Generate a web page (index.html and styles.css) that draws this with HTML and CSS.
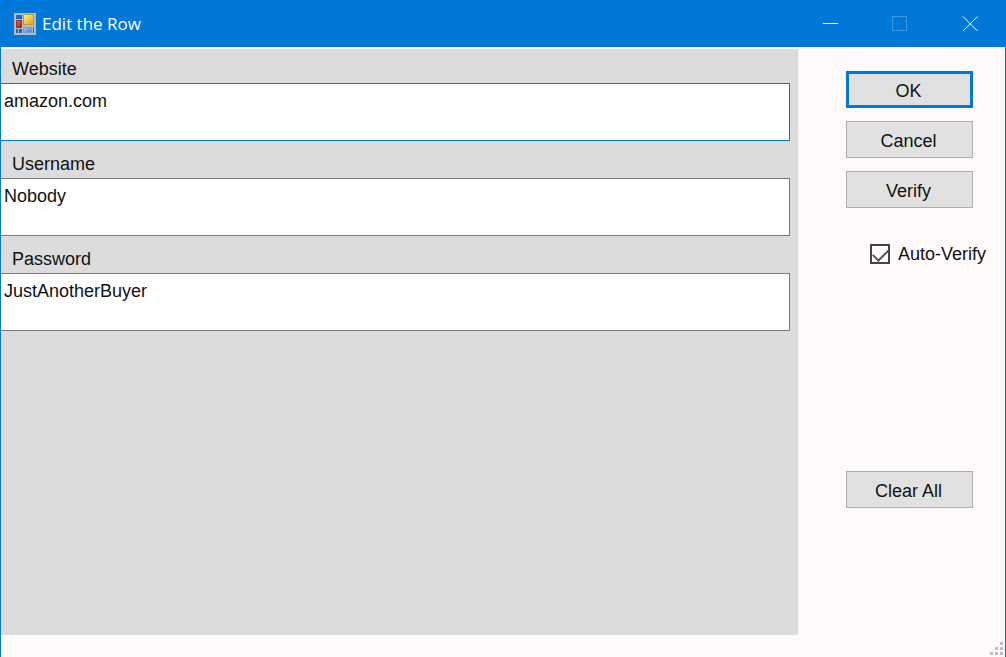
FILE: index.html
```html
<!DOCTYPE html>
<html lang="en">
<head>
  <meta charset="UTF-8">
  <meta name="viewport" content="width=device-width, initial-scale=1.0">
  <title>Edit the Row</title>
  <link rel="stylesheet" href="styles.css">
</head>
<body>
  <form class="window">
    <header class="titlebar">
      <svg class="app-icon" width="22" height="22" viewBox="0 0 22 22" aria-hidden="true">
        <defs>
          <linearGradient id="yellow" x1="0" y1="0" x2="1" y2="1">
            <stop offset="0" stop-color="#fff0a0"/>
            <stop offset="1" stop-color="#dfa207"/>
          </linearGradient>
          <linearGradient id="red" x1="0" y1="0" x2="1" y2="1">
            <stop offset="0" stop-color="#e07a70"/>
            <stop offset="1" stop-color="#a81414"/>
          </linearGradient>
          <linearGradient id="blue" x1="0" y1="0" x2="1" y2="1">
            <stop offset="0" stop-color="#a9ccff"/>
            <stop offset="1" stop-color="#3f78d8"/>
          </linearGradient>
        </defs>
        <path fill="#b4bdc3" d="M0 0h22v22H0z"/>
        <path fill="#0f6fc0" d="M2 2h6v4H2zM2 16h2v4H2zM5 16h3v4H5zM19 14h1v6h-1z"/>
        <path fill="url(#yellow)" stroke="#c79a22" d="M9.500 1.500h10v10h-10z"/>
        <path fill="url(#red)" stroke="#9c2a28" d="M2.500 7.500h5v7h-5z"/>
        <path fill="url(#blue)" stroke="#6c9be0" d="M9.500 14.500h8v5h-8z"/>
      </svg>
      <h1>Edit the Row</h1>
      <div class="window-controls">
        <button type="button" aria-label="Minimize">
          <svg width="16" height="16" viewBox="0 0 16 16"><path d="M1 7.500h15"/></svg>
        </button>
        <button type="button" aria-label="Maximize" disabled>
          <svg width="16" height="16" viewBox="0 0 16 16"><path d="M.5.5h14v14H.5z"/></svg>
        </button>
        <button type="button" aria-label="Close">
          <svg width="16" height="16" viewBox="0 0 16 16"><path d="M1 .5l14.500 14.500M15.500 .5L1 15"/></svg>
        </button>
      </div>
    </header>

    <div class="content">
      <main class="fields">
        <div class="field">
          <label for="website">Website</label>
          <textarea class="active" id="website" spellcheck="false">amazon.com</textarea>
        </div>
        <div class="field">
          <label for="username">Username</label>
          <textarea id="username" spellcheck="false">Nobody</textarea>
        </div>
        <div class="field">
          <label for="password">Password</label>
          <textarea id="password" spellcheck="false">JustAnotherBuyer</textarea>
        </div>
      </main>

      <aside class="actions">
        <button class="btn btn-default" type="submit">OK</button>
        <button class="btn" type="button">Cancel</button>
        <button class="btn" type="button">Verify</button>
        <label class="check"><input type="checkbox" checked>Auto-Verify</label>
        <button class="btn btn-clear" type="reset">Clear All</button>
      </aside>
    </div>

    <footer class="statusbar">
      <svg width="13" height="13" viewBox="0 0 13 13" aria-hidden="true">
        <path fill="#bfbdbd" d="M10 0h3v3h-3zM5 5h3v3H5zM10 5h3v3h-3zM0 10h3v3H0zM5 10h3v3H5zM10 10h3v3h-3z"/>
      </svg>
    </footer>
  </form>
</body>
</html>
```

FILE: styles.css
```css
:root {
  --accent: #0078d7;
  --form-bg: #fffafa;
  --panel: #dcdcdc;
  --button: #e1e1e1;
}

* {
  box-sizing: border-box;
}

body {
  margin: 0;
  font-family: "Liberation Sans", Arial, sans-serif;
  font-size: 18px;
  line-height: 24px;
  color: #111;
}

.window {
  display: flex;
  flex-direction: column;
  min-height: 100vh;
  background: var(--form-bg);
  border: solid var(--accent);
  border-width: 0 1px;
}

.titlebar {
  display: flex;
  align-items: center;
  height: 47px;
  padding-left: 13px;
  background: var(--accent);
  color: #fff;
}

.titlebar h1 {
  flex: 1;
  margin: 0 0 0 6px;
  font-family: "Open Sans", "Noto Sans", sans-serif;
  font-size: 17px;
  font-weight: 400;
}

.window-controls {
  display: flex;
}

.window-controls button {
  display: flex;
  align-items: center;
  justify-content: center;
  width: 70px;
  height: 47px;
  padding: 0;
  border: 0;
  background: none;
}

.window-controls svg {
  fill: none;
  stroke: #fff;
}

.window-controls button:disabled svg {
  stroke: #3d98e0;
}

.content {
  display: flex;
  flex: 1;
}

.fields {
  display: flex;
  flex-direction: column;
  gap: 9px;
  flex: 1;
  margin-top: 2px;
  padding: 6px 8px 0 0;
  background: var(--panel);
}

.field label {
  display: block;
  padding-left: 11px;
  line-height: 28px;
}

.field textarea {
  display: block;
  width: 100%;
  height: 58px;
  padding: 5px 3px;
  border: 1px solid #7a7a7a;
  border-left: 0;
  background: #fff;
  color: inherit;
  font: inherit;
  outline: 0;
  resize: none;
}

.field textarea.active,
.field textarea:focus {
  border-color: var(--accent);
}

.actions {
  display: flex;
  flex-direction: column;
  gap: 13px;
  width: 207px;
  padding: 24px 12px 24px 48px;
}

.btn {
  width: 127px;
  height: 37px;
  padding: 3px 2px 0 0;
  border: 1px solid #adadad;
  background: var(--button);
  color: inherit;
  font: inherit;
}

.btn-default {
  border: 3px solid var(--accent);
}

.check {
  display: flex;
  align-items: center;
  gap: 8px;
  margin: 21px 0 0 24px;
  white-space: nowrap;
}

.check input {
  display: flex;
  align-items: flex-start;
  justify-content: center;
  appearance: none;
  width: 20px;
  height: 20px;
  margin: 0;
  border: 2px solid #444;
  background: #fff;
}

.check input:checked::before {
  content: "";
  width: 13px;
  height: 7px;
  margin-top: 3px;
  border: 2px solid #555;
  border-width: 0 0 2px 2px;
  transform: rotate(-45deg);
}

.btn-clear {
  margin-top: 192px;
}

.statusbar {
  display: flex;
  align-items: flex-end;
  justify-content: flex-end;
  height: 22px;
  padding: 0 2px 2px;
}
```
